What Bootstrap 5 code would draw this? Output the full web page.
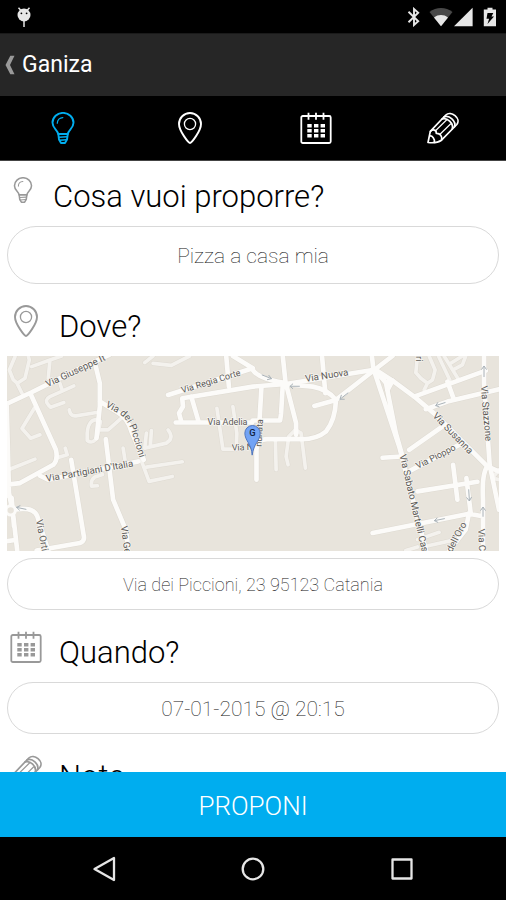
<!DOCTYPE html>
<html lang="it">
<head>
<meta charset="utf-8">
<meta name="viewport" content="width=device-width, initial-scale=1">
<title>Ganiza</title>
<link href="https://cdn.jsdelivr.net/npm/bootstrap@5.3.0/dist/css/bootstrap.min.css" rel="stylesheet">
<style>
  body { font-family: Roboto, "Noto Sans", sans-serif; color: #000; }
  svg { display: block; flex: none; }
  .status-bar { height: 33px; padding: 0 9px 0 16px; color: #e6e6e6; }
  .title-bar { height: 63px; padding-left: 5px; background: #262626; border-top: 1px solid #1a1a1a; }
  .title-bar a { font-size: 23px; line-height: 32px; color: #fff; gap: 7px; }
  .step-tabs { height: 65px; border-bottom: 1px solid #444; }
  .step-tabs button { color: #fff; }
  .step-tabs button.active { color: #00aeef; }
  .form-area { overflow-y: auto; scrollbar-width: none; padding: 0 7px; }
  .form-area::-webkit-scrollbar { display: none; }
  .ask { padding: 21px 3px 8px; gap: 17px; color: #999; }
  .ask.ask-first { padding-top: 14px; }
  .ask label { font-size: 31px; line-height: 43px; font-weight: 300; color: #000; }
  .pill { height: 52px; border: 1px solid #d9d9d9; border-radius: 29px; font-weight: 100; font-size: 21px; color: #111; text-align: center; padding: 2px 24px 0; }
  .pill-tall { height: 58px; }
  .pill-address { font-size: 18px; }
  .map-view { width: 100%; height: auto; margin-bottom: 7px; background: #e8e4dc; }
  .map-view text { font-family: Roboto, sans-serif; font-size: 29px; fill: #5c5a57; stroke: #f7f5f1; stroke-width: 4px; paint-order: stroke; }
  .map-view .street-small { font-size: 27px; }
  .map-view .pin-letter { font-size: 28px; font-weight: 500; fill: #10213f; stroke: none; }
  .send { height: 65px; padding: 3px 0 0; background: #00adef; color: #fff; font-size: 26px; font-weight: 300; }
  .system-nav { height: 63px; padding: 0 90px; color: #e6e6e6; }
</style>
</head>
<body>
<svg width="0" height="0" class="position-absolute" aria-hidden="true">
  <defs>
    <symbol id="i-bulb" viewBox="0 0 32 32">
      <g fill="none" stroke="currentColor" stroke-width="1.900" stroke-linecap="round" stroke-linejoin="round">
        <path d="M11.200 22C10.800 18 5.500 16.500 5.500 10.800a10.500 9.900 0 0 1 21 0C26.500 16.500 21.200 18 20.800 22z"/>
        <path d="M11.300 22l.7 5.500 2 3.500h4l2-3.500.8-5.500"/>
        <path d="M12 25.300l8-.6M12.600 28.300l6.800-.6" stroke-width="1.400"/>
        <path d="M10.300 11.200a5.800 5.800 0 0 1 5.500-5.600" stroke-width="1.300"/>
      </g>
    </symbol>
    <symbol id="i-pin" viewBox="0 0 32 32">
      <g fill="none" stroke="currentColor" stroke-linejoin="round">
        <path stroke-width="1.900" d="M16 31C14.600 31 5 19 5 12a11 11 0 0 1 22 0c0 7-9.600 19-11 19z"/>
        <circle cx="16" cy="12" r="5.600" stroke-width="1.300"/>
      </g>
    </symbol>
    <symbol id="i-calendar" viewBox="0 0 32 32">
      <rect x="1.300" y="4" width="29.400" height="27" rx="1.500" fill="none" stroke="currentColor" stroke-width="1.800"/>
      <path d="M8.500 .8v7M16 .8v7M23.500 .8v7" stroke="currentColor" stroke-width="1.800"/>
      <path fill="currentColor" d="M7.300 12h4.400v3.400H7.300zM14 12h4.400v3.400H14zM20.600 12H25v3.400h-4.400zM7.300 17h4.400v3.400H7.300zM14 17h4.400v3.400H14zM20.600 17H25v3.400h-4.400zM7.300 22h4.400v3.400H7.300zM14 22h4.400v3.400H14zM20.600 22H25v3.400h-4.400z"/>
    </symbol>
    <symbol id="i-pencil" viewBox="0 0 32 32">
      <g fill="none" stroke="currentColor" stroke-width="1.700" stroke-linejoin="round" stroke-linecap="round">
        <path d="M1 30.500L3.300 19.300 18.800 3C24-1.800 34.500 6.500 29.800 12.500L14.500 28.200C10.500 31 5 31 1 30.500z"/>
        <path d="M3.500 19.300C6 16.800 9.500 18 9.300 21.300 13 21 15.700 24.500 14.500 28"/>
        <path d="M17 5C22 2.500 29.500 9 27.500 14.800M15 7C20 5 27 11.500 25.200 17"/>
        <path d="M2.800 24C5 23.300 8.300 27 7.300 30.300"/>
        <path d="M9 18.300L19.500 8M13 22.300L23.500 12" stroke-width="1.200"/>
      </g>
    </symbol>
  </defs>
</svg>

<div class="vh-100 d-flex flex-column bg-white overflow-hidden">
  <div class="status-bar bg-black d-flex align-items-center justify-content-between flex-shrink-0">
    <svg width="16" height="20" viewBox="0 0 16 20" fill="currentColor" role="img" aria-label="Debug">
      <circle cx="8" cy="8" r="6.500"/><path d="M2.500 .8L5 3.500M13.500 .8L11 3.500M8 13v7" stroke="currentColor" stroke-width="1.500"/>
      <circle cx="5.400" cy="6.300" r=".9" fill="#000"/><circle cx="10.600" cy="6.300" r=".9" fill="#000"/>
    </svg>
    <div class="d-flex align-items-center">
      <svg class="me-2" width="14" height="20" viewBox="0 0 14 20" role="img" aria-label="Bluetooth"><path d="M1.500 4.800l9.700 9.400L7 18V2l4.200 3.800L1.500 15.200" fill="none" stroke="currentColor" stroke-width="1.900"/></svg>
      <svg width="24" height="20" viewBox="0 0 24 20" fill="currentColor" role="img" aria-label="Wi-Fi"><path fill="#484848" d="M.5 5C7-.2 17-.2 23.500 5L12 19.300z"/><path d="M5 10.500c4-3.300 10-3.300 14 0l-7 8.800z"/></svg>
      <svg class="me-2" width="22" height="20" viewBox="0 0 22 20" fill="currentColor" role="img" aria-label="Segnale"><path d="M1 19.300L19.600 .8v18.500z"/></svg>
      <svg width="14" height="20" viewBox="0 0 14 20" role="img" aria-label="Batteria in carica"><path fill="currentColor" d="M4.500 .8h5v1.700h3.500v16.800H.8V2.500h3.700z"/><path fill="#000" d="M4.500 6h5.800L8.500 9.500h2.500L4.500 17l1.600-5.300H3.500z"/></svg>
    </div>
  </div>

  <header class="title-bar d-flex align-items-center flex-shrink-0">
    <a href="#" class="d-flex align-items-center text-decoration-none">
      <svg width="10" height="20" viewBox="0 0 10 20" aria-hidden="true"><path d="M5.300 .8H9.500L5 10l4.500 9.200H5.300L.5 10z" fill="#999"/></svg>
      <span>Ganiza</span>
    </a>
  </header>

  <nav class="step-tabs bg-black d-flex flex-shrink-0" aria-label="Passi">
    <button type="button" class="btn active flex-fill d-flex align-items-center justify-content-center border-0 rounded-0 p-0 bg-black" aria-label="Cosa"><svg width="32" height="32"><use href="#i-bulb"/></svg></button>
    <button type="button" class="btn flex-fill d-flex align-items-center justify-content-center border-0 rounded-0 p-0 bg-black" aria-label="Dove"><svg width="32" height="32"><use href="#i-pin"/></svg></button>
    <button type="button" class="btn flex-fill d-flex align-items-center justify-content-center border-0 rounded-0 p-0 bg-black" aria-label="Quando"><svg width="32" height="32"><use href="#i-calendar"/></svg></button>
    <button type="button" class="btn flex-fill d-flex align-items-center justify-content-center border-0 rounded-0 p-0 bg-black" aria-label="Note"><svg width="32" height="32"><use href="#i-pencil"/></svg></button>
  </nav>

  <main class="form-area flex-grow-1">
    <div class="ask ask-first d-flex align-items-start">
      <svg width="26" height="30" viewBox="0 0 26 30" aria-hidden="true"><use href="#i-bulb" y="2" width="26" height="26"/></svg>
      <label for="what">Cosa vuoi proporre?</label>
    </div>
    <input id="what" class="pill pill-tall w-100 d-block bg-white" type="text" value="Pizza a casa mia">

    <div class="ask d-flex align-items-start">
      <svg width="32" height="32" aria-hidden="true"><use href="#i-pin"/></svg>
      <label for="where">Dove?</label>
    </div>
    <svg class="map-view" viewBox="21 18 1479 585" role="img" aria-label="Mappa di Catania">
      <defs>
        <path id="lane-piccioni" d="M316 170L362 194Q388 214 400 260L424 340"/>
        <g id="minor-roads">
          <path d="M45 20L28 60 40 90 52 100 75 85 88 30 85 18M95 50L150 30 185 18M150 30L145 85M50 98L66 130"/>
          <path d="M222 108L150 140Q132 150 145 165L152 172 192 158M180 100L186 118M208 180Q212 200 228 198L290 188"/>
          <path d="M298 210Q265 205 262 250V272Q280 285 292 260L302 215M296 240H325L370 200"/>
          <path d="M103 175L66 236 92 265 120 255M20 362L105 328M168 325L202 315 196 295M370 295L378 345M293 408L275 409Q272 390 285 382L308 374"/>
          <path d="M440 250L435 295 500 280Q525 265 505 240M455 242L452 288M440 352L548 336M424 330L448 395 518 380"/>
          <path d="M435 38L460 18M460 40L515 46 570 18M652 175L670 298H710L712 250 700 170"/>
          <path d="M828 275L830 360M866 345L860 320 868 260 888 240 905 250 918 355"/>
          <path d="M1255 18L1250 68 1265 85 1285 100 1275 120M1290 18L1308 60 1300 90 1285 100M1318 18L1352 90M1335 18L1378 88M1355 40L1390 18M1362 60L1390 45 1400 18M1500 360L1480 385 1500 390"/>
          <path d="M1255 570L1320 548M1280 590L1370 570M1220 603L1255 592"/>
        </g>
        <g id="major-roads">
          <path d="M18 163L95 127 240 55 328 15M92 132L168 300Q175 330 160 345L60 400 20 405M20 160L27 430 40 500 52 606M20 435L35 445 42 530M18 575L40 572M20 485Q100 465 112 500L145 603"/>
          <path d="M214 330L252 560Q255 575 240 580L110 603M318 268L340 450 380 545 385 603M288 50L300 100V170L290 265M300 155L350 185Q385 205 395 245L432 330M120 378L145 390 415 335"/>
          <path d="M505 135L760 55M760 55L700 18M680 18L688 110M548 145L760 110 860 102 1120 60M548 148L550 170 538 190 545 215M528 218H758M575 140L596 212"/>
          <path d="M760 60Q775 85 850 98M850 18L858 95 890 220V255M850 105L845 190 842 212H759M786 110L780 212M968 18L978 130"/>
          <path d="M860 103L940 110Q985 118 1010 150Q1008 210 980 245Q950 270 900 268H810Q770 265 771 300V390M945 168L1010 150 1125 60 1180 18"/>
          <path d="M1118 18L1122 55 1200 290 1285 620M1122 55L1160 98 1190 250 1210 320M1122 55L1180 92 1245 140 1310 195 1465 350 1500 365M1245 140L1460 62M1280 178L1345 155 1500 118M1345 95L1365 150"/>
          <path d="M1455 18V100L1472 345 1500 480M1465 350Q1448 370 1452 450V603M1330 230L1230 300M1150 324L1205 320M1235 362L1390 280M1255 425L1435 396M1362 345L1375 450M1402 385L1415 490M1120 550L1410 492 1450 500M1410 490L1400 540 1350 603"/>
          <path d="M1160 98L1180 92 1165 120"/>
        </g>
      </defs>
      <g fill="none" stroke-linecap="round" stroke-linejoin="round">
        <use href="#minor-roads" stroke="#dedad2" stroke-width="14"/>
        <use href="#major-roads" stroke="#dedad2" stroke-width="17"/>
        <use href="#minor-roads" stroke="#f4f2ee" stroke-width="11"/>
        <use href="#major-roads" stroke="#fcfbf9" stroke-width="14"/>
        <circle cx="32" cy="482" r="14" fill="#e8e4dc" stroke="#fcfbf9" stroke-width="9"/>
        <path stroke="#a9b2b8" stroke-width="3" d="M78 479L50 473M60 468L50 473 58 481M788 75L816 86M808 76L816 86 804 89M900 109H872M880 102L872 109 880 116M1046 129L1022 148M1026 136L1022 148 1035 148M1338 158L1310 167M1316 158L1310 167 1320 171M1455 80V50M1448 58L1455 48 1462 58M1409 420L1411 452M1403 444L1411 454 1417 443M1336 507L1306 513M1314 505L1306 513 1316 518M1452 500V474M1445 482L1452 472 1459 482"/>
      </g>
      <text transform="translate(143 112) rotate(-25)">Via Giuseppe It</text>
      <text><textPath href="#lane-piccioni">Via dei Piccioni</textPath></text>
      <text transform="translate(140 396) rotate(-10)">Via Partigiani D'Italia</text>
      <text transform="translate(108 512) rotate(79)">Via Ortigia</text>
      <text transform="translate(363 530) rotate(82)">Via Genova</text>
      <text class="street-small" transform="translate(548 130) rotate(-17)">Via Regia Corte</text>
      <text class="street-small" x="624" y="224">Via Adelia</text>
      <text class="street-small" transform="translate(697 303) rotate(-3)">Via N</text>
      <text class="street-small" transform="translate(786 291) rotate(-87)">nunata</text>
      <text transform="translate(919 96) rotate(-9)">Via Nuova</text>
      <text transform="translate(1250 18) rotate(90)">ri</text>
      <text transform="translate(1445 108) rotate(85)">Via Stazzone</text>
      <text transform="translate(1299 199) rotate(46)">Via Susanna</text>
      <text class="street-small" transform="translate(1256 358) rotate(-27)">Via Pioppo</text>
      <text transform="translate(1201 316) rotate(77)">Via Sabato Martelli Castaldi</text>
      <text transform="translate(1335 652) rotate(-62)">Via dell'Oro</text>
      <text transform="translate(1437 538) rotate(87)">Via Catania</text>
      <path d="M758 316C756 282 736 272 736 250a23 23 0 0 1 46 0C782 272 762 282 758 316z" fill="#72a3f5" stroke="#4f75bd" stroke-width="3"/>
      <text class="pin-letter" x="759" y="259" text-anchor="middle">G</text>
    </svg>
    <input id="where" class="pill pill-address w-100 d-block bg-white" type="text" value="Via dei Piccioni, 23 95123 Catania">

    <div class="ask d-flex align-items-start">
      <svg width="32" height="32" aria-hidden="true"><use href="#i-calendar"/></svg>
      <label for="when">Quando?</label>
    </div>
    <input id="when" class="pill w-100 d-block bg-white" type="text" value="07-01-2015 @ 20:15">

    <div class="ask d-flex align-items-start">
      <svg width="32" height="32" aria-hidden="true"><use href="#i-pencil"/></svg>
      <label for="notes">Note</label>
    </div>
    <input id="notes" class="pill w-100 d-block bg-white" type="text">
  </main>

  <button type="button" class="send btn border-0 rounded-0 w-100 flex-shrink-0">PROPONI</button>

  <div class="system-nav bg-black d-flex align-items-center justify-content-between flex-shrink-0">
    <button type="button" class="btn border-0 p-0 text-reset" aria-label="Indietro"><svg width="28" height="28" viewBox="0 0 28 28" fill="none" stroke="currentColor" stroke-width="2.300" stroke-linejoin="round"><path d="M24 3v22L4.500 14z"/></svg></button>
    <button type="button" class="btn border-0 p-0 text-reset" aria-label="Home"><svg width="28" height="28" viewBox="0 0 28 28" fill="none" stroke="currentColor" stroke-width="2.300"><circle cx="14" cy="14" r="10.300"/></svg></button>
    <button type="button" class="btn border-0 p-0 text-reset" aria-label="Recenti"><svg width="28" height="28" viewBox="0 0 28 28" fill="none" stroke="currentColor" stroke-width="2.300" stroke-linejoin="round"><path d="M4.500 4.500h19v19h-19z"/></svg></button>
  </div>
</div>
<script src="https://cdn.jsdelivr.net/npm/bootstrap@5.3.0/dist/js/bootstrap.bundle.min.js"></script>
</body>
</html>
